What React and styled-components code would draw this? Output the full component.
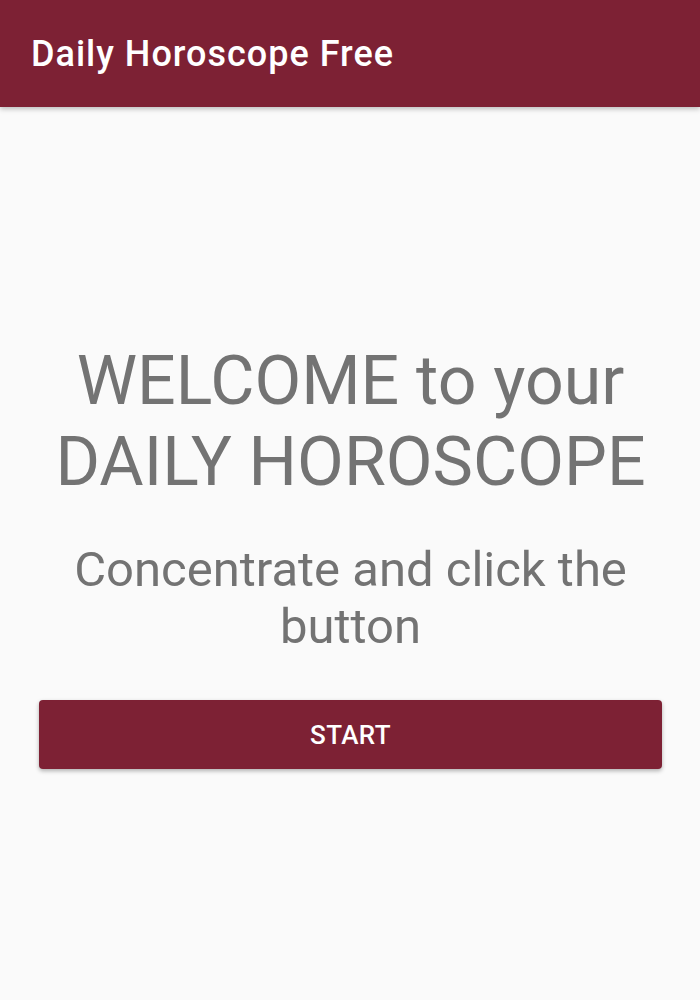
import React from "react";
import styled, { createGlobalStyle } from "styled-components";

const Global = createGlobalStyle`
  html, body { margin: 0; padding: 0; background: #fafafa; }
  body { font-family: Roboto, "Noto Sans", sans-serif; }
`;

const Page = styled.div`
  width: 700px;
  height: 1000px;
  background: #fafafa;
  display: flex;
  flex-direction: column;
  overflow: hidden;
`;

const AppBar = styled.header`
  height: 107px;
  background: #7d2134;
  display: flex;
  align-items: center;
  padding: 0 31px;
  box-shadow: 0 2px 5px rgba(0, 0, 0, 0.25);
  position: relative;
  z-index: 1;
  flex-shrink: 0;
`;

const Title = styled.h1`
  margin: 0;
  color: #ffffff;
  font-family: Roboto, sans-serif;
  font-weight: 500;
  font-size: 36px;
  letter-spacing: 1px;
`;

const Content = styled.main`
  flex: 1;
  display: flex;
  flex-direction: column;
  align-items: center;
  padding: 234px 38px 0 39px;
`;

const Heading = styled.div`
  color: #737373;
  font-family: Roboto, sans-serif;
  font-weight: 400;
  font-size: 68px;
  line-height: 81px;
  text-align: center;
  white-space: nowrap;
`;

const Sub = styled.div`
  margin-top: 38px;
  color: #737373;
  font-family: Roboto, sans-serif;
  font-weight: 400;
  font-size: 49px;
  line-height: 57px;
  text-align: center;
  white-space: nowrap;
`;

const Button = styled.button`
  margin-top: 45px;
  width: 100%;
  height: 69px;
  background: #7d2134;
  border: none;
  border-radius: 4px;
  color: #ffffff;
  font-family: Roboto, sans-serif;
  font-weight: 500;
  font-size: 26px;
  letter-spacing: 0.4px;
  box-shadow: 0 2px 4px rgba(0, 0, 0, 0.3);
  cursor: pointer;
`;

export default function App() {
  return (
    <>
      <Global />
      <Page>
        <AppBar>
          <Title>Daily Horoscope Free</Title>
        </AppBar>
        <Content>
          <Heading>
            WELCOME to your
            <br />
            DAILY HOROSCOPE
          </Heading>
          <Sub>
            Concentrate and click the
            <br />
            button
          </Sub>
          <Button>START</Button>
        </Content>
      </Page>
    </>
  );
}
